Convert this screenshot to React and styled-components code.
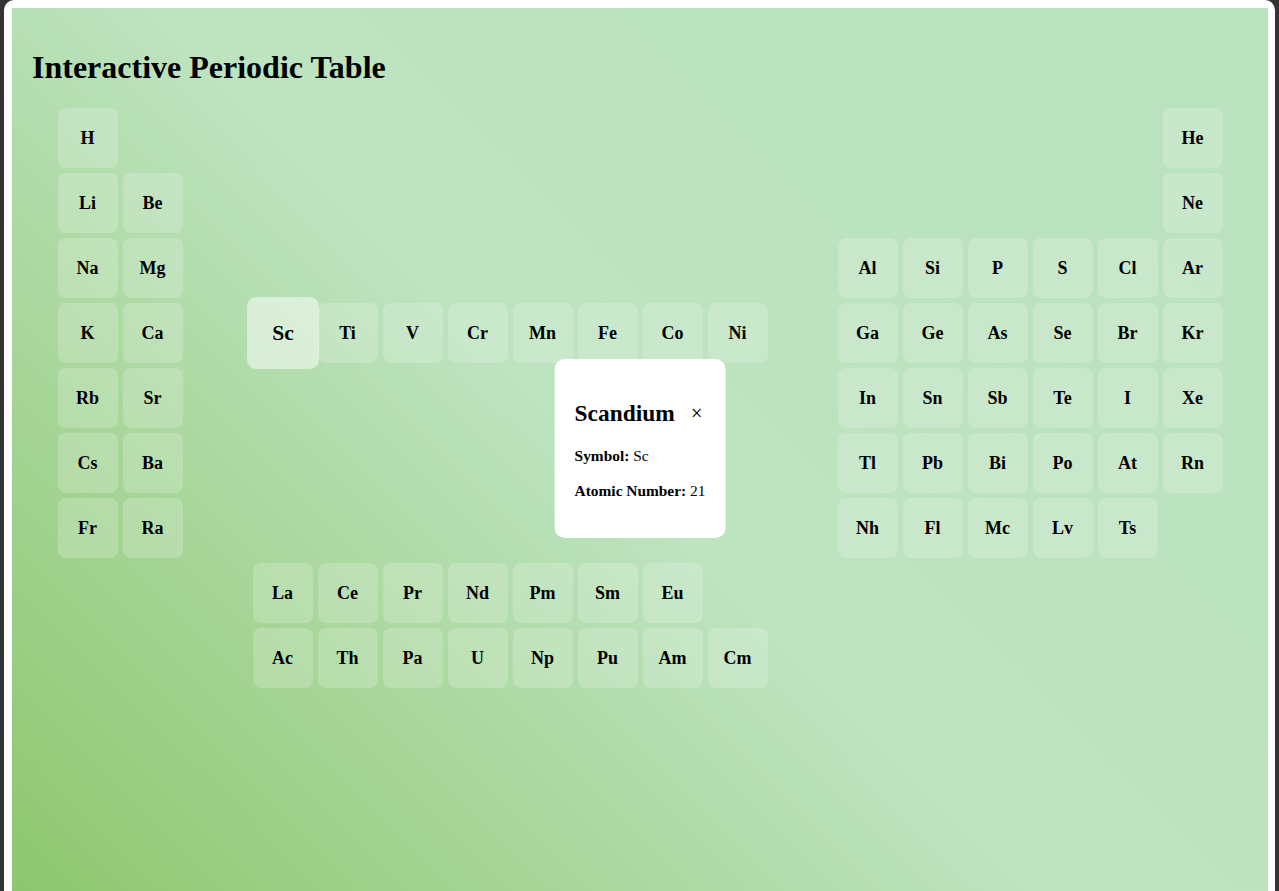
import React, { useState } from 'react';
import styled, { createGlobalStyle } from 'styled-components';

const Global = createGlobalStyle`
  html, body { margin: 0; padding: 0; background: #333333; }
  body { font-family: "Liberation Serif", "Times New Roman", serif; color: #000; }
`;

const Frame = styled.div`
  margin: 0 4px;
  background: #ffffff;
  border-radius: 10px;
  padding: 8px 7px 0 8px;
`;

const Panel = styled.div`
  position: relative;
  min-height: 900px;
  box-sizing: border-box;
  padding: 20px;
  background: linear-gradient(45deg, #8dc66c 0%, #bde3bf 48%, #bae2be 100%);
`;

const Title = styled.h1`
  font-size: 32px;
  font-weight: bold;
  margin: 21px 0 22px;
`;

const Grid = styled.div`
  display: grid;
  grid-template-columns: repeat(18, 60px);
  grid-auto-rows: 60px;
  gap: 5px;
  justify-content: center;
`;

const Tile = styled.div`
  display: flex;
  align-items: center;
  justify-content: center;
  border-radius: 8px;
  font-size: 18px;
  font-weight: bold;
  cursor: pointer;
  user-select: none;
  background: ${p => (p.$active ? 'rgba(255,255,255,0.5)' : 'rgba(255,255,255,0.2)')};
  transform: ${p => (p.$active ? 'scale(1.2)' : 'none')};
  z-index: ${p => (p.$active ? 1 : 0)};
  transition: transform 0.2s, background 0.2s;
`;

const Popup = styled.div`
  position: absolute;
  top: 351px;
  left: 50%;
  transform: translateX(-50%);
  background: #ffffff;
  border-radius: 10px;
  padding: 20px;
  z-index: 5;
`;

const PopupHeader = styled.div`
  display: flex;
  align-items: center;
  gap: 16px;
`;

const PopupTitle = styled.h2`
  font-size: 23.4px;
  font-weight: bold;
  margin: 21px 0 3px;
`;

const CloseButton = styled.button`
  background: none;
  border: none;
  padding: 0;
  margin-top: 18px;
  font-family: "Liberation Serif", "Times New Roman", serif;
  font-size: 21px;
  line-height: 1;
  cursor: pointer;
  color: #000;
`;

const Info = styled.p`
  font-size: 15.4px;
  margin: 17px 0;
  white-space: nowrap;
  &:last-child { margin-bottom: 18px; }
`;

const rows = [
  [['H', 1], ['He', 18]],
  [['Li', 1], ['Be', 2], ['Ne', 18]],
  [['Na', 1], ['Mg', 2], ['Al', 13], ['Si', 14], ['P', 15], ['S', 16], ['Cl', 17], ['Ar', 18]],
  [['K', 1], ['Ca', 2], ['Sc', 4], ['Ti', 5], ['V', 6], ['Cr', 7], ['Mn', 8], ['Fe', 9], ['Co', 10], ['Ni', 11],
    ['Ga', 13], ['Ge', 14], ['As', 15], ['Se', 16], ['Br', 17], ['Kr', 18]],
  [['Rb', 1], ['Sr', 2], ['In', 13], ['Sn', 14], ['Sb', 15], ['Te', 16], ['I', 17], ['Xe', 18]],
  [['Cs', 1], ['Ba', 2], ['Tl', 13], ['Pb', 14], ['Bi', 15], ['Po', 16], ['At', 17], ['Rn', 18]],
  [['Fr', 1], ['Ra', 2], ['Nh', 13], ['Fl', 14], ['Mc', 15], ['Lv', 16], ['Ts', 17]],
  [['La', 4], ['Ce', 5], ['Pr', 6], ['Nd', 7], ['Pm', 8], ['Sm', 9], ['Eu', 10]],
  [['Ac', 4], ['Th', 5], ['Pa', 6], ['U', 7], ['Np', 8], ['Pu', 9], ['Am', 10], ['Cm', 11]],
];

const details = {
  Sc: { name: 'Scandium', number: 21 },
};

export default function App() {
  const [selected, setSelected] = useState('Sc');
  const info = selected ? details[selected] || { name: selected, number: '' } : null;
  return (
    <>
      <Global />
      <Frame>
        <Panel>
          <Title>Interactive Periodic Table</Title>
          <Grid>
            {rows.map((row, r) =>
              row.map(([sym, col]) => (
                <Tile
                  key={sym}
                  $active={selected === sym}
                  style={{ gridRow: r + 1, gridColumn: col }}
                  onClick={() => setSelected(sym)}
                >
                  {sym}
                </Tile>
              ))
            )}
          </Grid>
          {info && (
            <Popup>
              <PopupHeader>
                <PopupTitle>{info.name}</PopupTitle>
                <CloseButton onClick={() => setSelected(null)}>×</CloseButton>
              </PopupHeader>
              <Info><b>Symbol:</b> {selected}</Info>
              <Info><b>Atomic Number:</b> {info.number}</Info>
            </Popup>
          )}
        </Panel>
      </Frame>
    </>
  );
}
